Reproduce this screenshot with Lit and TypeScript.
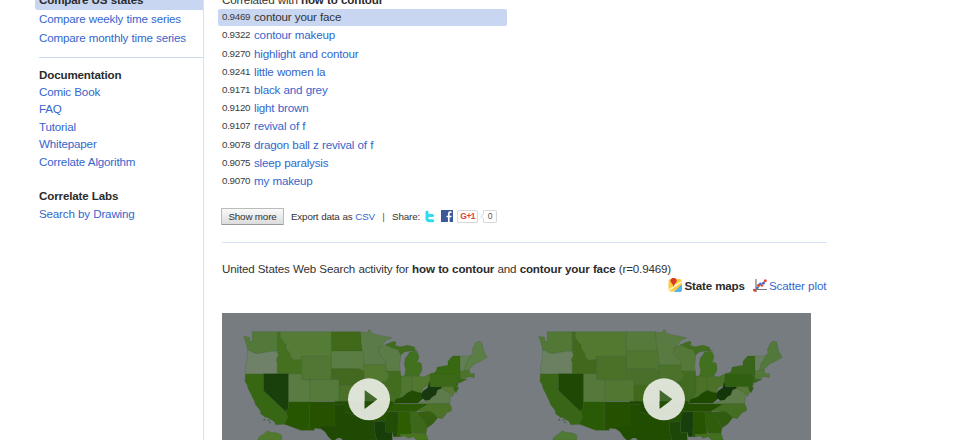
import { LitElement, html, svg, css } from "lit";
import { customElement, property } from "lit/decorators.js";

// Outline of each state, with its fill on the first and on the second map.
const STATES: [string, string, string][] = [
  ["M111,80H187V137L150,142 125,146 115,143 108,138 98,136 93,113 86,94 104,97 105,110 112,108 112,90Z", "#53793a", "#517834"],
  ["M98,136L108,138 115,143 125,146 150,142 170,139 190,141 191,150 184,165 187,172V207H91V190L96,165Z", "#6f8168", "#6b8061"],
  ["M187,80H196V96L205,110 213,118 213,130 224,143 228,158 237,165 260,163V206H187V172L184,165 191,150 187,141Z", "#44701f", "#41691c"],
  ["M196,80H349V154H260V163L237,165 228,158 224,143 213,130 213,118 205,110 196,96Z", "#557c37", "#527930"],
  ["M349,80H437L439,110 443,138H349Z", "#406a19", "#547b3b"],
  ["M349,138H443L446,152V198L435,192 415,191H349Z", "#5a7d43", "#507730"],
  ["M260,154H349V224H260Z", "#517734", "#4a7128"],
  ["M349,191H415L435,192 446,198 450,228 456,241H372V224H349Z", "#42691f", "#49702a"],
  ["M284,224H372V289H284Z", "#567a3c", "#517733"],
  ["M220,206H260V224H284V291H220Z", "#587c41", "#54793a"],
  ["M145,206H220V312L215,313V323L145,257Z", "#193f0b", "#1f4804"],
  ["M91,207H145V257L215,323 218,337 210,358 182,359 178,350 166,342 145,332 137,327 136,317 121,298 119,290 108,268 99,250 96,238 90,230Z", "#386713", "#396516"],
  ["M220,291H284V376H257L209,358 218,337 215,323V313L220,312Z", "#275600", "#2b5a06"],
  ["M284,291H360V363H315L317,371 298,370V376H284Z", "#265200", "#245000"],
  ["M372,241H456L462,255V289H372Z", "#4b7129", "#41691c"],
  ["M360,289H462L466,335 445,332 420,330 390,322V299H360Z", "#214d05", "#1f4800"],
  ["M360,299H390V322L420,330 445,332 466,335 478,345V372L485,405H383L377,399 368,399 360,405H350L340,395 330,380 315,370V363H360Z", "#204a03", "#214d00"],
  ["M437,82H459L460,74 466,75 468,84 485,89 500,92 531,98 515,105 502,120 492,127 490,142 501,157 513,171V180H446V152L441,135Z", "#5b7b48", "#597b41"],
  ["M446,180H511L514,190 522,205 520,220 511,230H451L446,198Z", "#53782f", "#4b722a"],
  ["M451,230H511L515,245 527,258 543,282 548,295H462V255Z", "#456d24", "#426a1e"],
  ["M502,122L520,118 530,126 550,132 558,145 556,165 554,180 556,199H514L512,183 513,171 501,157 490,146 492,127Z", "#5b7b47", "#547837"],
  ["M514,199H556L558,215V263L548,289 543,282 527,258 515,245 511,230 520,220 522,205Z", "#426d1f", "#416c20"],
  ["M558,213H592V256L575,265 564,275 552,281 558,263Z", "#507631", "#4a7125"],
  ["M511,119L528,112 538,109 544,113 540,121 555,125 577,121 588,123 599,127 600,134 608,139 590,138 570,140 557,150 550,134 530,128Z", "#416b1f", "#426c20"],
  ["M568,213L572,196 568,177 571,159 578,151 583,142 598,139 608,143 612,157 606,174 614,171 620,178 621,196 612,212Z", "#41701e", "#41701e"],
  ["M592,214L612,212 624,216 645,207V229L638,242 625,248 618,265 602,261 592,256Z", "#52772e", "#4b7028"],
  ["M536,295L542,283 564,275 575,265 592,256 605,261 618,263 625,280 608,295Z", "#224b03", "#204900"],
  ["M530,297H640L610,315 602,320H518Z", "#2b5904", "#244f00"],
  ["M618,267L625,257 638,248 643,229 647,245H665L680,244V254L668,255 663,270 652,276 644,285 632,287 620,278Z", "#17390d", "#13360b"],
  ["M645,207L652,203V207H722L731,216 727,232 730,241 722,245H645Z", "#3b6917", "#305f10"],
  ["M652,207L664,198 666,187 690,182 699,181 699,169 713,153H735V221L757,222 740,231 730,235 731,216 722,207Z", "#38680f", "#39651a"],
  ["M735,153H764L762,164 753,177 748,198H735Z", "#637e55", "#687e5f"],
  ["M764,161L766,151 774,146 772,133 782,113 790,109 800,111 806,138 817,157 798,168 780,176 770,185 762,194 748,198 753,177 762,164Z", "#5b7e47", "#52783b"],
  ["M735,198H748L762,194 767,207 778,205V219L765,215 755,218 735,222Z", "#4d742a", "#527838"],
  ["M731,216L730,231 724,243 731,248 723,264 716,255 715,245H722Z", "#376716", "#2e5e0d"],
  ["M680,245H713L718,263 712,276 704,265 692,257 680,250Z", "#577833", "#567735"],
  ["M608,296L632,287 644,285 652,276 663,270 668,255 680,250 692,257 704,265 707,282 704,296Z", "#5d7b4b", "#5d7c49"],
  ["M640,296H704L710,308 709,318 696,323 682,341 668,338 653,323 640,319H602L610,315Z", "#4b7227", "#456e23"],
  ["M608,322L640,319 653,323 668,338 654,356 636,369 628,350 612,332Z", "#365f10", "#305c0f"],
  ["M584,321H608L612,332 628,350 636,370 633,386 594,385 588,366Z", "#3d681a", "#305d0b"],
  ["M550,321H584L588,366 592,386 555,388V395H548Z", "#2d5d00", "#265400"],
  ["M514,321H550L548,395H535L532,382H512V348Z", "#214d07", "#183f0b"],
  ["M462,289H533L536,296 518,320 513,348H478L466,335Z", "#275300", "#235001"],
  ["M478,349H512V382H531L532,405H485L478,372Z", "#173d09", "#1d4709"],
  ["M555,388L592,386 633,386 640,405H605L595,395 580,400 570,393 555,396Z", "#48741d", "#42701c"],
  ["M128,405L132,396 145,388 156,377 167,382 188,384 200,390V405Z", "#527a2f", "#4f7935"],
  ["M149,333h5v4h-5zM146,343h4v3h-4zM157,344h9v2h-9zM164,350l4,4h-5z", "#3b6822", "#3b6822"],
];

const DOCS = ["Comic Book", "FAQ", "Tutorial", "Whitepaper", "Correlate Algorithm"];

const TERMS: [string, string][] = [
  ["0.9469", "contour your face"],
  ["0.9322", "contour makeup"],
  ["0.9270", "highlight and contour"],
  ["0.9241", "little women la"],
  ["0.9171", "black and grey"],
  ["0.9120", "light brown"],
  ["0.9107", "revival of f"],
  ["0.9078", "dragon ball z revival of f"],
  ["0.9075", "sleep paralysis"],
  ["0.9070", "my makeup"],
];

@customElement("state-map")
class StateMap extends LitElement {
  @property({ type: Number }) series = 1;

  static styles = css`
    :host { display: block; width: 294.5px; height: 127px; }
    svg { display: block; }
    path.state { stroke: #31591c; stroke-opacity: 0.3; stroke-width: 2; }
  `;

  render() {
    return html`<svg width="294.5" height="127" viewBox="21 24 883.5 381">
      ${STATES.map((s) => svg`<path class="state" d=${s[0]} fill=${s[this.series]}></path>`)}
      <circle cx="462" cy="283" r="63" fill="#e8ece3" fill-opacity="0.93"></circle>
      <path d="M449,255L487,283 449,311Z" fill="#42692b"></path>
      <path d="M449,289H479L449,311Z" fill="#244d08"></path>
    </svg>`;
  }
}

@customElement("app-root")
class AppRoot extends LitElement {
  static styles = css`
    :host {
      display: flex;
      height: 440px;
      overflow: hidden;
      background: #fff;
      color: #333;
      font-family: "Liberation Sans", Arial, sans-serif;
      font-size: 11.6px;
      letter-spacing: -0.17px;
      word-spacing: 0.25px;
      white-space: nowrap;
    }
    a { color: #3366cc; text-decoration: none; }
    b { color: #2b2b2b; letter-spacing: -0.15px; }
    .side {
      box-sizing: border-box;
      width: 204px;
      height: 440px;
      padding-left: 35px;
      border-right: 1px solid #d5e2f7;
      flex: none;
    }
    .nav { padding-left: 4px; line-height: 17.6px; height: 19px; }
    .nav.on {
      margin-top: -9px;
      background: #c8d6f2;
      border-radius: 3px 0 0 3px;
    }
    .rule { margin: 9px 0 7.8px 4px; height: 1px; background: #ccdaee; }
    .group { padding-left: 4px; line-height: 17.35px; margin-bottom: 17.35px; }
    .main { padding-left: 13.5px; }
    .head { line-height: 17px; height: 18px; margin-top: -9.4px; padding-left: 4.5px; }
    .term {
      display: flex;
      align-items: center;
      gap: 3.7px;
      width: 285px;
      height: 18.2px;
      line-height: 18.2px;
      padding-left: 4.5px;
    }
    .term.on { background: #c8d6f2; border-radius: 2px; height: 17.4px; line-height: 16.6px; align-items: flex-start; margin-bottom: 0.4px; }
    .score { font-size: 9.8px; letter-spacing: -0.28px; color: #3c3c3c; width: 28.3px; }
    .tools {
      display: flex;
      align-items: center;
      height: 18px;
      margin: 17.3px 0 0 3.5px;
      font-size: 9.8px;
      letter-spacing: -0.16px;
    }
    .more {
      box-sizing: border-box;
      width: 63px;
      height: 16.5px;
      border: 1px solid #bbb;
      border-bottom-color: #999;
      border-radius: 1px;
      background: linear-gradient(#fafafa, #dcdcdc);
      font: inherit;
      letter-spacing: inherit;
      color: #333;
      padding: 0;
      margin-right: 7px;
    }
    .bar { color: #555; margin: 0 7.4px; }
    .tw { margin-left: 5.2px; }
    .fb { margin-left: 6px; }
    .plus, .count {
      box-sizing: border-box;
      height: 13px;
      line-height: 11px;
      border: 1px solid #d8d8d8;
      border-radius: 2px;
      text-align: center;
      font-size: 8.5px;
    }
    .plus { width: 21px; margin-left: 4px; color: #dc4437; font-weight: bold; letter-spacing: -0.5px; }
    .tip { margin-left: 1.5px; margin-right: -1px; z-index: 1; }
    .count { width: 13.5px; border-left: none; color: #555; }
    .line { height: 1.5px; width: 605px; margin: 16.5px 0 0 4.5px; background: #d5e2f7; }
    .activity { margin: 16.5px 0 0 4.5px; line-height: 17px; }
    .views {
      display: flex;
      align-items: center;
      justify-content: flex-end;
      width: 608.8px;
      height: 17px;
    }
    .views b { margin: 0 8.5px 0 2.3px; letter-spacing: -0.2px; }
    .views a { margin-left: 1.8px; letter-spacing: -0.13px; }
    .stage {
      display: flex;
      width: 589px;
      height: 128px;
      margin: 19.1px 0 0 4.5px;
      background: #777c81;
      overflow: hidden;
    }
  `;

  render() {
    return html`
      <nav class="side">
        <div class="nav on"><b>Compare US states</b></div>
        <div class="nav"><a>Compare weekly time series</a></div>
        <div class="nav"><a>Compare monthly time series</a></div>
        <div class="rule"></div>
        <div class="group">
          <b>Documentation</b>
          ${DOCS.map((d) => html`<div><a>${d}</a></div>`)}
        </div>
        <div class="group">
          <b>Correlate Labs</b>
          <div><a>Search by Drawing</a></div>
        </div>
      </nav>
      <main class="main">
        <div class="head">Correlated with <b>how to contour</b></div>
        ${TERMS.map(
          ([score, term], i) => html`<div class=${i ? "term" : "term on"}>
            <span class="score">${score}</span>${i ? html`<a>${term}</a>` : html`<span>${term}</span>`}
          </div>`
        )}
        <div class="tools">
          <button class="more">Show more</button>
          <span>Export data as <a>CSV</a></span>
          <span class="bar">|</span>
          <span>Share:</span>
          <svg class="tw" width="10" height="13" viewBox="0 0 10 13">
            <path d="M2,2V8.5Q2,10.8 4.5,10.8H7.8M2,5.6H7.5" fill="none" stroke="#2fdcf0" stroke-width="3" stroke-linecap="round"></path>
          </svg>
          <svg class="fb" width="12" height="12" viewBox="0 0 12 12">
            <path d="M0,0H12V12H0Z" fill="#3b5998"></path>
            <path d="M10.5,2.2H9.2Q7.8,2.2 7.8,3.8V12M5.5,6.5H10.5" fill="none" stroke="#fff" stroke-width="1.7"></path>
          </svg>
          <span class="plus">G+1</span>
          <svg class="tip" width="5" height="13" viewBox="0 0 5 13">
            <path d="M5,0.5H3.5V4.5L0.7,6.5 3.5,8.5V12.5H5" fill="#fff" stroke="#d8d8d8"></path>
          </svg>
          <span class="count">0</span>
        </div>
        <div class="line"></div>
        <div class="activity">
          United States Web Search activity for <b>how to contour</b> and <b>contour your face</b> (r=0.9469)
        </div>
        <div class="views">
          <svg width="14" height="14" viewBox="0 0 14 14">
            <rect x="0.5" y="1" width="13" height="12.5" rx="2" fill="#fbcb3d"></rect>
            <path d="M6,14L14,6V12Q14,14 12,14Z" fill="#52b4ee"></path>
            <path d="M1,12L13,4" stroke="#fff3c0" stroke-width="1.6"></path>
            <path d="M5.5,9.5Q5.2,6.5 3.2,4.6A3,3 0 1 1 8,4.6Q5.8,6.5 5.5,9.5Z" fill="#d93a25"></path>
          </svg>
          <b>State maps</b>
          <svg width="14" height="13" viewBox="0 0 14 13">
            <path d="M3,0V13M0,10.5H14" stroke="#777" stroke-width="1.2"></path>
            <path d="M1.5,12L12.5,1.5" stroke="#888" stroke-width="1"></path>
            <g fill="#dc4a32"><circle cx="1.8" cy="11.3" r="1.5"></circle><circle cx="5.5" cy="6.3" r="1.5"></circle><circle cx="9" cy="6.5" r="1.3"></circle><circle cx="12.3" cy="1.7" r="1.5"></circle></g>
            <g fill="#3c68c8"><circle cx="4.4" cy="8.8" r="1.3"></circle><circle cx="7.3" cy="4.8" r="1.3"></circle><circle cx="10.5" cy="4.2" r="1.4"></circle></g>
          </svg>
          <a>Scatter plot</a>
        </div>
        <div class="stage">
          <state-map .series=${1}></state-map>
          <state-map .series=${2}></state-map>
        </div>
      </main>
    `;
  }
}
